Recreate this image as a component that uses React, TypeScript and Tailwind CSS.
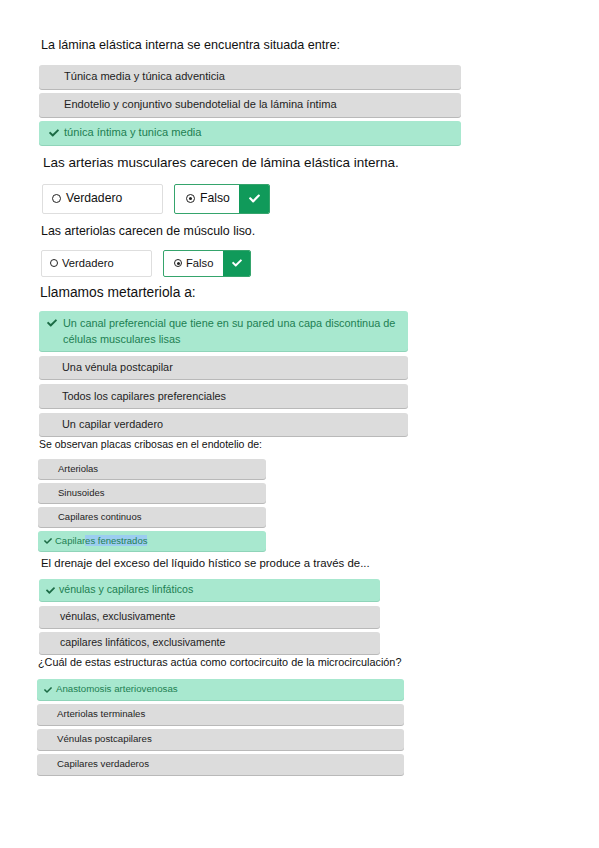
import React from "react";
import { FaCheck } from "react-icons/fa";

type Opt = { text: React.ReactNode; ok?: boolean };

const font = { fontFamily: '"Liberation Sans", Arial, sans-serif' };

const Option = ({
  opt,
  box,
  text,
  pad,
  okPad,
  icon,
}: {
  opt: Opt;
  box: string;
  text: string;
  pad: string;
  okPad: string;
  icon: string;
}) =>
  opt.ok ? (
    <div
      className={`flex items-center rounded-[3px] bg-[#a8e8cf] text-[#1d7f52] shadow-[0_1px_0_#8fd4b9] ${box} ${text} ${okPad}`}
    >
      <FaCheck className={`shrink-0 text-[#1c6b45] ${icon}`} />
      <span>{opt.text}</span>
    </div>
  ) : (
    <div
      className={`flex items-center rounded-[3px] bg-[#dcdcdc] text-[#1e1e1e] shadow-[0_1px_0_#b9b9b9] ${box} ${text} ${pad}`}
    >
      {opt.text}
    </div>
  );

const Radio = ({ on, size }: { on?: boolean; size: string }) => (
  <span
    className={`inline-flex shrink-0 items-center justify-center rounded-full border-[1.5px] border-[#222] ${size}`}
  >
    {on && <span className="h-[3px] w-[3px] rounded-full bg-[#222]" />}
  </span>
);

export default function App() {
  return (
    <div className="min-h-[848px] w-[599px] bg-white text-[#111]" style={font}>
      {/* 1 */}
      <div className="pl-[41px] pt-[37px] text-[12.6px] leading-[16px]">
        La lámina elástica interna se encuentra situada entre:
      </div>
      <div className="ml-[39px] mt-[12px] flex w-[422px] flex-col gap-[4.5px]">
        {[
          { text: "Túnica media y túnica adventicia" },
          { text: "Endotelio y conjuntivo subendotelial de la lámina íntima" },
          { text: "túnica íntima y tunica media", ok: true },
        ].map((o, i) => (
          <Option
            key={i}
            opt={o}
            box="h-[23.5px]"
            text="text-[11.1px]"
            pad="pl-[25px]"
            okPad="pl-[10px] gap-[5px]"
            icon="w-[10px] h-[10px]"
          />
        ))}
      </div>

      {/* 2 */}
      <div className="pl-[43px] mt-[9px] text-[13.5px] leading-[18px]">
        Las arterias musculares carecen de lámina elástica interna.
      </div>
      <div className="ml-[42px] mt-[12px] flex gap-[11px] text-[12.2px]">
        <div className="flex h-[30px] w-[121px] items-center gap-[5px] rounded-[2px] border border-[#dedede] pl-[9px]">
          <Radio size="h-[9px] w-[9px]" />
          Verdadero
        </div>
        <div className="flex h-[30px] w-[96px] items-stretch overflow-hidden rounded-[2px] border border-[#35a46c]">
          <div className="flex flex-1 items-center gap-[5px] pl-[11px]">
            <Radio on size="h-[9px] w-[9px]" />
            Falso
          </div>
          <div className="flex w-[30px] items-center justify-center bg-[#109a5a]">
            <FaCheck className="h-[11px] w-[11px] text-white" />
          </div>
        </div>
      </div>

      {/* 3 */}
      <div className="pl-[41px] mt-[9px] text-[12.4px] leading-[16px]">
        Las arteriolas carecen de músculo liso.
      </div>
      <div className="ml-[41px] mt-[11px] flex gap-[11px] text-[11.2px]">
        <div className="flex h-[27px] w-[111px] items-center gap-[4px] rounded-[2px] border border-[#dedede] pl-[8px]">
          <Radio size="h-[8px] w-[8px]" />
          Verdadero
        </div>
        <div className="flex h-[27px] w-[88px] items-stretch overflow-hidden rounded-[2px] border border-[#35a46c]">
          <div className="flex flex-1 items-center gap-[4px] pl-[10px]">
            <Radio on size="h-[8px] w-[8px]" />
            Falso
          </div>
          <div className="flex w-[27px] items-center justify-center bg-[#109a5a]">
            <FaCheck className="h-[10px] w-[10px] text-white" />
          </div>
        </div>
      </div>

      {/* 4 */}
      <div className="pl-[40px] mt-[8px] text-[13.8px] leading-[16px]">
        Llamamos metarteriola a:
      </div>
      <div className="ml-[39px] mt-[10px] flex w-[369px] flex-col gap-[5px]">
        <div className="flex items-start gap-[6px] rounded-[3px] bg-[#a8e8cf] pb-[4px] pl-[8px] pr-[8px] pt-[4px] text-[10.9px] leading-[16px] text-[#1d7f52] shadow-[0_1px_0_#8fd4b9]">
          <FaCheck className="mt-[3px] h-[10px] w-[10px] shrink-0 text-[#1c6b45]" />
          <span>
            Un canal preferencial que tiene en su pared una capa discontinua de células
            musculares lisas
          </span>
        </div>
        {["Una vénula postcapilar", "Todos los capilares preferenciales", "Un capilar verdadero"].map(
          (t) => (
            <Option
              key={t}
              opt={{ text: t }}
              box="h-[23.5px]"
              text="text-[10.9px]"
              pad="pl-[23px]"
              okPad=""
              icon=""
            />
          )
        )}
      </div>

      {/* 5 */}
      <div className="pl-[39px] mt-[2px] text-[10.5px] leading-[12px]">
        Se observan placas cribosas en el endotelio de:
      </div>
      <div className="ml-[38px] mt-[9px] flex w-[228px] flex-col gap-[4px]">
        {[
          { text: "Arteriolas" },
          { text: "Sinusoides" },
          { text: "Capilares continuos" },
          {
            text: (
              <>
                Capilar<span className="bg-[#9ccdf0]">es fenestrados</span>
              </>
            ),
            ok: true,
          },
        ].map((o, i) => (
          <Option
            key={i}
            opt={o}
            box="h-[20px]"
            text="text-[9.5px]"
            pad="pl-[20px]"
            okPad="pl-[6px] gap-[3px]"
            icon="w-[8px] h-[8px]"
          />
        ))}
      </div>

      {/* 6 */}
      <div className="pl-[41px] mt-[5px] text-[11.4px] leading-[14px]">
        El drenaje del exceso del líquido hístico se produce a través de...
      </div>
      <div className="ml-[39px] mt-[9px] flex w-[341px] flex-col gap-[4.5px]">
        {[
          { text: "vénulas y capilares linfáticos", ok: true },
          { text: "vénulas, exclusivamente" },
          { text: "capilares linfáticos, exclusivamente" },
        ].map((o, i) => (
          <Option
            key={i}
            opt={o}
            box="h-[22px]"
            text="text-[10.6px]"
            pad="pl-[21px]"
            okPad="pl-[7px] gap-[4px]"
            icon="w-[9px] h-[9px]"
          />
        ))}
      </div>

      {/* 7 */}
      <div className="pl-[38px] mt-[2px] text-[10.85px] leading-[13px]">
        ¿Cuál de estas estructuras actúa como cortocircuito de la microcirculación?
      </div>
      <div className="ml-[37px] mt-[10px] flex w-[367px] flex-col gap-[4px]">
        {[
          { text: "Anastomosis arteriovenosas", ok: true },
          { text: "Arteriolas terminales" },
          { text: "Vénulas postcapilares" },
          { text: "Capilares verdaderos" },
        ].map((o, i) => (
          <Option
            key={i}
            opt={o}
            box="h-[21px]"
            text="text-[9.7px]"
            pad="pl-[20px]"
            okPad="pl-[7px] gap-[4px]"
            icon="w-[8px] h-[8px]"
          />
        ))}
      </div>
    </div>
  );
}
